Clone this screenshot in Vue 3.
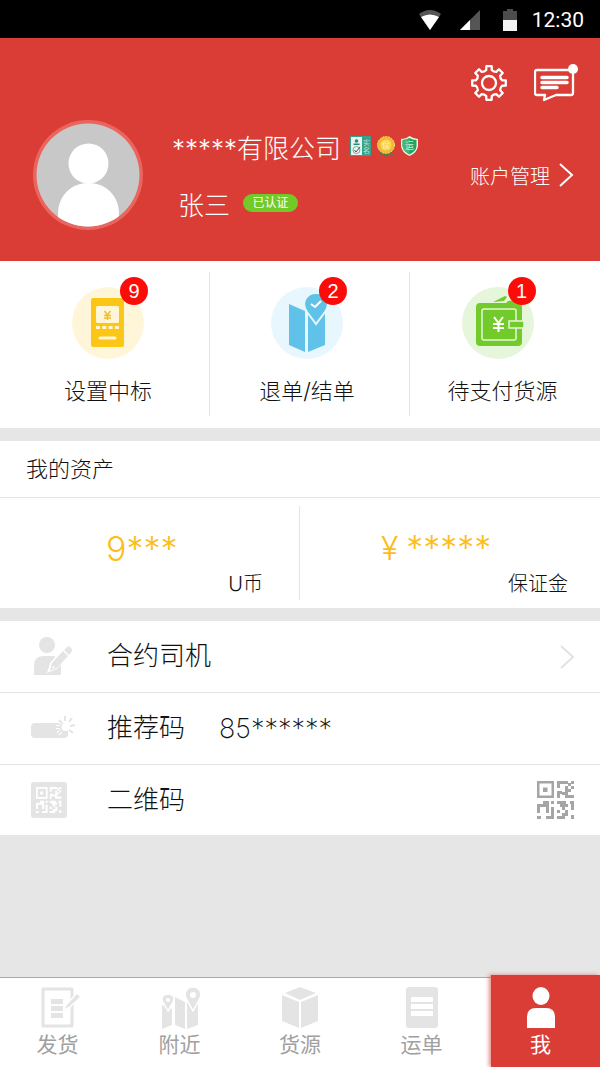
<script setup>
const shortcuts = [
  { id: 'bid', label: '设置中标', count: 9 },
  { id: 'return', label: '退单/结单', count: 2 },
  { id: 'pay', label: '待支付货源', count: 1 },
]
const tabs = [
  { id: 'send', label: '发货' },
  { id: 'near', label: '附近' },
  { id: 'goods', label: '货源' },
  { id: 'bill', label: '运单' },
  { id: 'me', label: '我', active: true },
]
const qr =
  'M0 0H17V17H0ZM2.500 2.500V14.500H14.500V2.500ZM6 6.500H10.500V11H6Z' +
  'M20 0H31V3H23V7H20ZM31 2H34V5H31ZM34 0H37V3H34ZM28 5H31V8H34V11H31V14H37V17H28V14H25V11H28ZM34 5H37V8H34ZM20 10H25V13H23V17H20Z' +
  'M6 20H12V32H9V26H3V32H0V23H6ZM14 20H17V23H14ZM0 35H4V38H0ZM14 26H17V38H9V35H14Z' +
  'M20 20H29V23H31V26H28V29H25V26H23V23H20ZM33 20H37V29H34V23H33ZM28 29H31V35H28V38H20V35H25V32H28ZM20 29H23V32H20ZM34 34H37V38H34Z'

// Outline of an eight-toothed cog, centred on (18, 18)
const cogPoint = (radius, degrees) => {
  const a = (degrees * Math.PI) / 180
  return `${(18 + radius * Math.cos(a)).toFixed(2)} ${(18 + radius * Math.sin(a)).toFixed(2)}`
}
const cog =
  Array.from({ length: 8 }, (_, i) => {
    const a = i * 45
    return (
      `${i ? 'L' : 'M'}${cogPoint(13.3, a - 12)}L${cogPoint(17, a - 9)}` +
      `L${cogPoint(17, a + 9)}L${cogPoint(13.3, a + 12)}A6 6 0 0 0 ${cogPoint(13.3, a + 33)}`
    )
  }).join('') + 'Z'
</script>

<template>
  <div class="page">
    <div class="status">
      <svg width="24" height="20" viewBox="0 0 24 20" aria-hidden="true">
        <path d="M1 4Q12 -4 23 4L12 20Z" fill="#555" />
        <path d="M3 7Q12 2 21 7L12 20Z" fill="#fff" />
      </svg>
      <svg class="signal" width="20" height="20" viewBox="0 0 20 20" aria-hidden="true">
        <path d="M20 0V20H0Z" fill="#555" />
        <path d="M10 10V20H0Z" fill="#fff" />
      </svg>
      <svg class="battery" width="14" height="22" viewBox="0 0 14 22" aria-hidden="true">
        <path d="M4 0H10V2H14V11H0V2H4Z" fill="#4c4c4c" />
        <path d="M0 11H14V22H0Z" fill="#f4f4f4" />
      </svg>
      <span class="clock">12:30</span>
    </div>

    <header class="profile">
      <div class="tools">
        <button type="button" aria-label="设置">
          <svg width="36" height="38" viewBox="0 -1 36 38" fill="none" stroke="#fff" stroke-width="2.300" stroke-linejoin="round">
            <path :d="cog" />
            <circle cx="18" cy="18" r="7" />
          </svg>
        </button>
        <button type="button" aria-label="消息">
          <svg width="44" height="38" viewBox="0 0 44 38" fill="none" stroke="#fff">
            <path d="M3 6H37Q39 6 39 8V29Q39 31 37 31H22L10 36L11 31H3Q1 31 1 29V8Q1 6 3 6Z" stroke-width="2.300" stroke-linejoin="round" />
            <path d="M8 13.500H33M8 18.500H33M8 23.500H23" stroke-width="3.500" stroke-linecap="round" />
            <circle cx="39" cy="5" r="5" fill="#fff" stroke="none" />
          </svg>
        </button>
      </div>
      <div class="identity">
        <svg class="avatar" width="110" height="110" viewBox="0 0 110 110" role="img" aria-label="头像">
          <defs><clipPath id="face"><circle cx="55" cy="55" r="51.500" /></clipPath></defs>
          <circle cx="55" cy="55" r="55" fill="#e9655e" />
          <circle cx="55" cy="55" r="51.500" fill="#c8c8c8" />
          <g clip-path="url(#face)" fill="#fff">
            <circle cx="55.500" cy="43.500" r="20" />
            <path d="M25 110V94C25 76 38 63 55.500 63S86 76 86 94V110Z" />
          </g>
        </svg>
        <div class="who">
          <div class="company">
            <span>*****有限公司</span>
            <svg class="medals" width="70" height="22" viewBox="0 0 70 22" aria-hidden="true">
              <rect width="21" height="20" y="1" rx="1" fill="#38a189" />
              <rect x="1" y="2" width="11" height="18" fill="#e7f4f1" />
              <circle cx="6.500" cy="6" r="1.800" fill="#248b74" />
              <path d="M3.500 10V8.500H9.500V10Z" fill="#248b74" />
              <circle cx="6.500" cy="15" r="3.500" fill="none" stroke="#78a99e" />
              <path d="M4.500 15L6 17L10 12" fill="none" stroke="#555" />
              <text x="13" y="10" font-size="7" fill="#fff">实</text>
              <text x="13" y="18" font-size="7" fill="#fff">名</text>
              <path d="M31 15L29 20L33 19L36 22L39 19L43 20L41 15Z" fill="#47804a" />
              <circle cx="36" cy="10" r="8.500" fill="#f0bb32" stroke="#ffdd66" stroke-dasharray="2 1" />
              <circle cx="36" cy="10" r="5.500" fill="#fbd552" />
              <text x="32" y="13" font-size="8" fill="#fff9d8">保</text>
              <path d="M59.500 1Q64 4 68 4V11Q67 18 59.500 21Q52 18 51 11V4Q56 4 59.500 1Z" fill="#e8f7ee" />
              <path d="M59.500 3Q63 5 66.500 5V11Q66 16.500 59.500 19.500Q53.500 16.500 52.500 11V5Q56 5 59.500 3Z" fill="#24a260" />
              <path d="M59.500 3V19.500Q53.500 16.500 52.500 11V5Q56 5 59.500 3Z" fill="#44b677" />
              <text x="55" y="14" font-size="9" fill="#fff">运</text>
            </svg>
          </div>
          <div class="person"><span>张三</span><span class="verified">已认证</span></div>
        </div>
        <a class="account" href="#account">
          账户管理
          <svg width="16" height="26" viewBox="0 0 16 26" fill="none" stroke="#fff" stroke-width="2"><path d="M2 2L14 13L2 24" /></svg>
        </a>
      </div>
    </header>

    <nav class="shortcuts" aria-label="快捷入口">
      <a v-for="s in shortcuts" :key="s.id" :href="'#' + s.id" :class="s.id">
        <span class="bubble">
          <svg width="72" height="72" viewBox="0 0 72 72" aria-hidden="true">
            <g v-if="s.id === 'bid'">
              <rect x="19" y="11" width="33" height="49" rx="2" fill="#fcc616" />
              <rect x="24" y="19" width="23" height="17" rx="1.500" fill="#fff6da" />
              <path d="M32.500 24L35.500 28L38.500 24M32 28.500H39M32 31H39M35.500 28V33" stroke="#f1be27" stroke-width="1.500" fill="none" />
              <path d="M24 40.500H47" stroke="#fff6da" stroke-width="3" stroke-dasharray="4 2.300" />
              <path d="M28 51H43" stroke="#fff6da" stroke-width="3" stroke-linecap="round" />
            </g>
            <g v-else-if="s.id === 'return'">
              <path d="M18 17L34 24V65L18 58ZM37 24L54 17V58L37 65Z" fill="#60c2e8" />
              <path d="M45 37L36 25C29 15 36 6 45 6S61 15 54 25Z" fill="#60c2e8" stroke="#e8f7fd" stroke-width="2" />
              <path d="M40 17L44 20L50 14" stroke="#fff" stroke-width="2" fill="none" />
            </g>
            <g v-else>
              <path d="M31 15L43 9L45 10L42 14ZM46 14L59 12L60 17H43Z" fill="#73cb2b" />
              <rect x="14" y="16" width="46" height="43" rx="4" fill="#73cb2b" />
              <rect x="20" y="22" width="34" height="31" rx="2" fill="none" stroke="#e6f6db" stroke-width="1.500" />
              <rect x="47" y="34" width="15" height="7" fill="#73cb2b" stroke="#e6f6db" stroke-width="1.500" />
              <path d="M32 30L36.500 36L41 30M31 37H42M31 41H42M36.500 36V45" stroke="#fff" stroke-width="2" fill="none" />
            </g>
          </svg>
          <b class="badge">{{ s.count }}</b>
        </span>
        <span>{{ s.label }}</span>
      </a>
    </nav>

    <section class="assets">
      <h2>我的资产</h2>
      <div class="amounts">
        <div class="amount coins"><strong>9***</strong><span>U币</span></div>
        <div class="amount deposit"><strong><i>¥</i>*****</strong><span>保证金</span></div>
      </div>
    </section>

    <section class="rows">
      <a class="row" href="#drivers">
        <svg width="46" height="40" viewBox="0 0 46 40" fill="#e4e4e4" aria-hidden="true">
          <circle cx="17" cy="8" r="8" />
          <path d="M4 38V29Q4 19 13 19H22Q27 19 31 24V38Z" />
          <path d="M17 36L20 26L36 8L44 14L27 32Z" fill="#fff" />
          <path d="M20 34L22 26L33 14L38 19L27 31ZM34 13L37 10Q39 8 41 11T42 14L39 18Z" />
          <path d="M23 29L25 30L24 31L22 32Z" fill="#fff" />
        </svg>
        <span>合约司机</span>
        <svg class="end" width="16" height="26" viewBox="0 0 16 26" fill="none" stroke="#e2e2e2" stroke-width="2"><path d="M2 2L14 13L2 24" /></svg>
      </a>
      <div class="row">
        <svg width="46" height="40" viewBox="0 0 46 40" aria-hidden="true">
          <rect x="1" y="14" width="37" height="15" rx="4" fill="#e4e4e4" />
          <path d="M32 14L29 11M30 18H26M31 22L28 25" stroke="#fff" stroke-width="4" />
          <circle cx="35.500" cy="18" r="4" fill="#fff" />
          <path d="M35 12V7M39 13L42 9M40 17L45 16M39 21L43 24M32 14L29 11M31 18H26M32 21L28 25M36 23L37 27" stroke="#e4e4e4" stroke-width="2" />
        </svg>
        <span>推荐码</span><span class="code">85******</span>
      </div>
      <a class="row" href="#qrcode">
        <svg width="46" height="40" viewBox="0 0 46 40" aria-hidden="true">
          <rect x="1" y="2" width="36" height="36" rx="3" fill="#e4e4e4" />
          <svg x="6" y="7" width="26" height="26" viewBox="0 0 38 38"><path :d="qr" fill="#fff" fill-rule="evenodd" /></svg>
        </svg>
        <span>二维码</span>
        <svg class="end" width="38" height="38" viewBox="0 0 38 38" aria-hidden="true"><path :d="qr" fill="#a5a5a5" fill-rule="evenodd" /></svg>
      </a>
    </section>

    <nav class="tabs" aria-label="主导航">
      <a v-for="t in tabs" :key="t.id" :href="'#' + t.id" :class="{ active: t.active }">
        <svg width="44" height="42" viewBox="0 0 44 42" fill="#e4e4e4" aria-hidden="true">
          <g v-if="t.id === 'send'">
            <path d="M7 2H36V39H7Z" fill="none" stroke="#e4e4e4" stroke-width="3" stroke-linejoin="round" />
            <path d="M15 12H27V17H15ZM15 19H27V24H15ZM15 26H27V31H15Z" />
            <path d="M28 24L30 17L40 6L45 10L34 21Z" fill="#fff" />
            <path d="M29 22L31 18L41 7L44 10L34 19Z" />
          </g>
          <g v-else-if="t.id === 'near'">
            <path d="M4 18L14 22V38L4 42ZM17 10L27 15V42L17 38ZM29 15L40 11V38L29 42Z" />
            <path d="M10 24L6 17C1 10 6 7 10 7S19 10 14 17ZM35 24L29 13C24 5 30 0 35 0S46 5 41 13Z" stroke="#fff" stroke-width="1.500" />
            <circle cx="10" cy="13" r="2" fill="#fff" /><circle cx="35" cy="8" r="3" fill="#fff" />
          </g>
          <g v-else-if="t.id === 'goods'">
            <path d="M22 0L38 6L22 13L7 6ZM4 8L21 15V41L4 34ZM23 15L40 8V34L23 41Z" />
          </g>
          <g v-else-if="t.id === 'bill'">
            <rect x="6" y="0" width="32" height="41" rx="3" />
            <path d="M11 10H33V15H11ZM11 17H33V22H11ZM11 24H33V29H11Z" fill="#fff" />
          </g>
          <g v-else fill="#fff">
            <ellipse cx="22" cy="9" rx="8.500" ry="9" />
            <path d="M8 41V30Q8 21 17 21H27Q36 21 36 30V41Z" />
          </g>
        </svg>
        <span>{{ t.label }}</span>
      </a>
    </nav>
  </div>
</template>

<style>
body { margin: 0; background: #e6e6e6; }
</style>

<style scoped>
.page {
  display: flex;
  flex-direction: column;
  min-height: 100vh;
  color: #111;
  font-family: Inter, "Noto Sans CJK SC", sans-serif;
  font-weight: 300;
}
a { color: inherit; text-decoration: none; }
svg { display: block; flex: none; }
.status {
  display: flex;
  align-items: center;
  justify-content: flex-end;
  height: 38px;
  padding: 2px 16px 0;
  box-sizing: border-box;
  background: #000;
  color: #fff;
}
.signal { margin-left: 18px; }
.battery { margin-left: 23px; }
.clock { margin-left: 15px; font: 400 21px/36px Roboto, sans-serif; }
.profile {
  height: 223px;
  box-sizing: border-box;
  padding: 26px 26px 0 33px;
  background: #da3d35;
  color: #fff;
}
.tools { display: flex; justify-content: flex-end; gap: 27px; height: 38px; margin-right: -4px; }
.tools button { padding: 0; border: 0; background: none; }
.identity { display: flex; margin-top: 18px; }
.who { flex: 1; margin-left: 29px; white-space: nowrap; }
.company { display: flex; align-items: center; gap: 9px; height: 40px; margin-top: 6px; font-size: 26px; }
.medals { font-family: "Noto Sans CJK SC", sans-serif; }
.person { display: flex; align-items: center; gap: 13px; height: 40px; margin: 17px 0 0 6px; font-size: 26px; }
.verified {
  width: 55px;
  border-radius: 9px;
  background: #72c928;
  font-size: 12px;
  font-weight: 400;
  line-height: 18px;
  text-align: center;
}
.account { display: flex; align-items: center; gap: 8px; height: 26px; margin-top: 42px; font-size: 20px; }
.shortcuts { display: grid; grid-template-columns: 209fr 200fr 191fr; padding: 11px 0 12px; background: #fff; }
.shortcuts a {
  display: flex;
  flex-direction: column;
  align-items: center;
  height: 144px;
  box-sizing: border-box;
  font-size: 22px;
  line-height: 32px;
}
.shortcuts a + a { border-left: 1px solid #e4e4e4; }
.bubble { position: relative; margin: 15px 0 16px; border-radius: 50%; }
.shortcuts .bid { padding-left: 7px; }
.bid .bubble { background: #fff6da; }
.shortcuts .return { padding-right: 5px; }
.return .bubble { background: #e8f7fd; }
.shortcuts .pay { padding-right: 5px; }
.pay .bubble { margin-right: 10px; background: #e6f6db; }
.badge {
  position: absolute;
  top: -10px;
  right: -4px;
  width: 28px;
  height: 28px;
  border-radius: 50%;
  background: #fb0c08;
  color: #fff;
  font: 400 20px/28px "Liberation Sans", sans-serif;
  text-align: center;
}
.pay .badge { right: -2px; }
.assets { margin-top: 13px; background: #fff; }
.assets h2 {
  margin: 0;
  padding-left: 26px;
  border-bottom: 1px solid #e4e4e4;
  font-size: 22px;
  font-weight: 300;
  line-height: 56px;
}
.amounts { display: grid; grid-template-columns: 1fr 1fr; padding: 8px 0; }
.amount { display: flex; flex-direction: column; height: 94px; }
.coins { border-right: 1px solid #e4e4e4; }
.amount strong { color: #fcbd1b; font-size: 34px; font-weight: 300; line-height: 42px; }
.amount span { font-size: 20px; line-height: 28px; text-align: right; }
.coins strong { padding: 22px 0 0 106px; }
.coins span { padding-right: 36px; }
.deposit strong { padding: 21px 0 0 81px; }
.deposit strong i { margin-right: 8px; font-size: 32px; font-style: normal; }
.deposit span { padding-right: 32px; }
.rows { margin-top: 13px; background: #fff; }
.row { display: flex; align-items: center; height: 70px; padding: 0 25px 0 30px; font-size: 26px; line-height: 40px; }
.row:not(:last-child) { height: 71px; border-bottom: 1px solid #e4e4e4; }
.row span { margin-left: 31px; padding-bottom: 1px; }
.row .code { margin-left: 34px; padding-bottom: 0; font-size: 27px; font-weight: 200; }
.row .end { margin-left: auto; }
.tabs {
  display: grid;
  grid-template-columns: 115fr 129fr 112fr 131fr 4fr 109fr;
  height: 89px;
  margin-top: auto;
  border-top: 1px solid #aaa;
  background: #fff;
  color: #a0a0a0;
  font-size: 21px;
  font-weight: 400;
  line-height: 30px;
}
.tabs a { display: flex; flex-direction: column; align-items: center; gap: 1px; padding-top: 9px; }
.tabs .active {
  grid-column: 6;
  margin-top: -3px;
  padding: 12px 10px 0 0;
  background: #da3d35;
  color: #fff;
  box-shadow: -2px 0 4px #da3d3599;
}
</style>
